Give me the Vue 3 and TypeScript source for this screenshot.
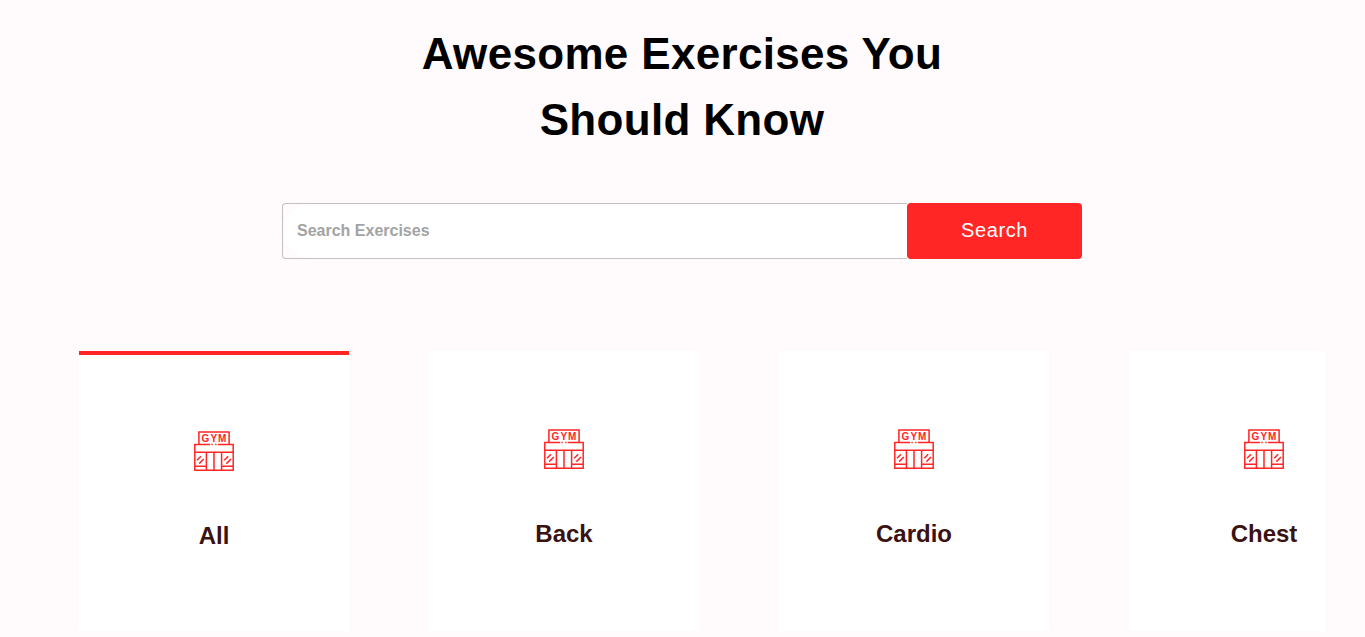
<script setup lang="ts">
import { ref } from 'vue'

const bodyParts: string[] = ['All', 'Back', 'Cardio', 'Chest']
const selected = ref('All')
const query = ref('')
</script>

<template>
  <main class="page">
    <h1 class="title">Awesome Exercises You<br />Should Know</h1>

    <form class="search" role="search" @submit.prevent>
      <div class="field">
        <input v-model="query" class="input" type="text" placeholder="Search Exercises" aria-label="Search Exercises" />
      </div>
      <button class="submit" type="submit">Search</button>
    </form>

    <div class="parts">
      <button
        v-for="part in bodyParts"
        :key="part"
        type="button"
        class="card"
        :class="{ active: part === selected }"
        :aria-pressed="part === selected"
        @click="selected = part"
      >
        <svg class="icon" viewBox="0 0 40 40" aria-hidden="true">
          <g fill="none" stroke="#ff2625" stroke-width="1.5">
            <path d="M4.9 13.5V.9H35.1V13.5" />
            <path d="M16.2 13.5H.8V39.2H39.2V13.5H23.8M17.4 13.5H18.8M21.2 13.5H22.6" />
            <path d="M.8 21.2H39.2M12.4 21V39M20 21V39M27.6 21V39M.8 35.3H12.3M27.7 35.3H39.2" />
            <path d="M3 29.2L7 25.2M5.2 32.6L9.8 28M30.2 29.2L34.2 25.2M32.4 32.6L37 28" />
          </g>
          <text class="sign" x="20.5" y="10.8" text-anchor="middle">GYM</text>
        </svg>
        <span class="name">{{ part }}</span>
      </button>
    </div>
  </main>
</template>

<style>
body {
  margin: 0;
  background: #fffafb;
}
</style>

<style scoped>
.page {
  display: flex;
  flex-direction: column;
  align-items: center;
  padding: 21px 1px 0 0;
  background: #fffafb;
  font-family: "Liberation Sans", Arial, sans-serif;
}
.title {
  margin: 0 0 50px;
  font-size: 44px;
  line-height: 66px;
  font-weight: 700;
  letter-spacing: 0.00735em;
  text-align: center;
  color: #000;
}
.search {
  display: flex;
  width: 100%;
  max-width: 800px;
  height: 56px;
  margin-bottom: 92px;
}
.field {
  display: flex;
  flex: 1;
  min-width: 0;
  box-sizing: border-box;
  border: 1px solid #c4c0c1;
  border-right: 0;
  border-radius: 4px 0 0 4px;
}
.input {
  flex: 1;
  min-width: 0;
  padding: 0 14px;
  border: 0;
  border-radius: 28px 0 0 28px;
  outline: 0;
  background: #fff;
  font-family: inherit;
  font-size: 16px;
  font-weight: 700;
  color: #000;
}
.input::placeholder {
  color: #a3a3a3;
  opacity: 1;
}
.submit {
  width: 175px;
  padding: 0 0 2px;
  border: 0;
  border-radius: 4px;
  background: #ff2625;
  color: #fff;
  font-family: inherit;
  font-size: 20px;
  letter-spacing: 0.02857em;
  cursor: pointer;
}
.parts {
  display: flex;
  gap: 80px;
  align-self: stretch;
  margin: 0 39px 6px;
  padding-left: 40px;
  overflow: hidden;
}
.card {
  display: flex;
  flex: 0 0 270px;
  flex-direction: column;
  align-items: center;
  justify-content: center;
  gap: 47px;
  height: 280px;
  box-sizing: border-box;
  padding: 0 0 2px;
  border: 0;
  background: #fff;
  font-family: inherit;
  cursor: pointer;
}
.active {
  border-top: 4px solid #ff2625;
}
.icon {
  width: 40px;
  height: 40px;
}
.sign {
  fill: #ff2625;
  font-size: 10px;
  font-weight: 700;
  letter-spacing: 1px;
}
.name {
  font-size: 24px;
  line-height: 36px;
  font-weight: 700;
  color: #3a1212;
}
</style>
